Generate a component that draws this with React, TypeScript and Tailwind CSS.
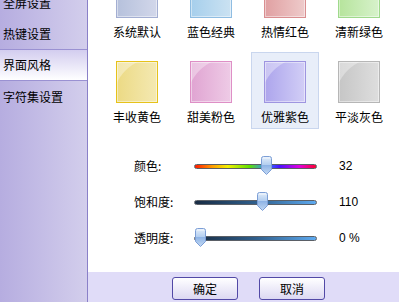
import { useState } from "react";

const menuItems = ["全屏设置", "热键设置", "界面风格", "字符集设置"];

const themes = [
  { name: "系统默认", cls: "from-[#b6c1dc] to-[#d2d7ea] border-[#a3aed2]" },
  { name: "蓝色经典", cls: "from-[#a6cfec] to-[#cbe2f2] border-[#8fbde2]" },
  { name: "热情红色", cls: "from-[#e0a0a2] to-[#eecbcb] border-[#d98e90]" },
  { name: "清新绿色", cls: "from-[#b6e49c] to-[#d7f2cb] border-[#9fd98c]" },
  { name: "丰收黄色", cls: "from-[#ecda84] to-[#f4e9b2] border-[#e6c21a]" },
  { name: "甜美粉色", cls: "from-[#e0a4d2] to-[#eecbe6] border-[#de8fc6]" },
  { name: "优雅紫色", cls: "from-[#ada5ec] to-[#d2cef6] border-[#9e95e0]" },
  { name: "平淡灰色", cls: "from-[#c6c6c6] to-[#dedede] border-[#b6b6b6]" },
];

function Thumb() {
  return (
    <svg width="11" height="19" viewBox="0 0 11 19">
      <defs>
        <linearGradient id="tg" x1="0" y1="0" x2="0" y2="1">
          <stop offset="0" stopColor="#e4eefa" />
          <stop offset="0.45" stopColor="#b4cff0" />
          <stop offset="0.5" stopColor="#8fb4e6" />
          <stop offset="1" stopColor="#c4daf4" />
        </linearGradient>
      </defs>
      <path d="M0.5 2.5 Q0.5 0.5 2.5 0.5 L8.5 0.5 Q10.5 0.5 10.5 2.5 L10.5 13.5 L5.5 18.5 L0.5 13.5 Z" fill="url(#tg)" stroke="#7c9ed6" />
      <path d="M2 2 L9 2" stroke="#ffffff" strokeOpacity="0.7" />
    </svg>
  );
}

function Slider({ label, value, pos, track }: { label: string; value: string; pos: number; track: string }) {
  return (
    <div className="flex items-center h-[36px]">
      <div className="w-[60px] text-[12px] leading-[16px] text-black">{label}</div>
      <div className="relative w-[123px] h-[19px] flex items-center">
        <div className={`w-full h-[5px] rounded-full border border-[#5a5f66] ${track}`} />
        <div className="absolute top-[-1px]" style={{ left: pos }}>
          <Thumb />
        </div>
      </div>
      <div className="ml-[22px] text-[12px] leading-[16px] text-black font-['Liberation_Sans',sans-serif]">{value}</div>
    </div>
  );
}

export default function App() {
  const [active, setActive] = useState(2);
  const [theme, setTheme] = useState(6);

  return (
    <div className="w-[399px] h-[302px] flex overflow-hidden bg-white font-['Noto_Sans_CJK_SC','Noto_Sans',sans-serif]">
      {/* Sidebar */}
      <div className="w-[88px] h-full border-r border-[#8a80c8] bg-gradient-to-r from-[#b6ade0] to-[#d3ceec] overflow-hidden">
        <div className="mt-[-13px]">
          {menuItems.map((item, i) =>
            i === active ? (
              <div
                key={item}
                className="h-[32px] flex items-center pl-[3px] border-y border-[#9a91d2] bg-gradient-to-b from-[#d3cdef] to-white text-[12px] text-black"
              >
                {item}
              </div>
            ) : (
              <div
                key={item}
                onClick={() => setActive(i)}
                className="h-[31px] flex items-center pl-[3px] text-[12px] text-black"
              >
                {item}
              </div>
            )
          )}
        </div>
      </div>

      {/* Main */}
      <div className="flex-1 flex flex-col">
        <div className="h-[272px] overflow-hidden bg-white">
          <div className="mt-[-33px] pl-[12px] grid grid-cols-[repeat(4,74px)] gap-y-[8px]">
            {themes.map((t, i) => (
              <div
                key={t.name}
                onClick={() => setTheme(i)}
                className={`mx-[3px] w-[68px] h-[77px] flex flex-col items-center pt-[8px] border ${
                  i === theme ? "border-[#c9d6ee] bg-[#e8eef9]" : "border-transparent"
                }`}
              >
                <div className={`relative w-[42px] h-[42px] border bg-gradient-to-r ${t.cls}`}>
                  <span className="absolute inset-0 shadow-[inset_0_0_0_1px_rgba(255,255,255,0.45)] bg-[radial-gradient(circle_at_100%_100%,transparent_44px,rgba(255,255,255,0.35)_45px)]" />
                </div>
                <div className="mt-[6px] text-[12px] leading-[16px] text-black whitespace-nowrap">{t.name}</div>
              </div>
            ))}
          </div>

          <div className="mt-[19px] pl-[46px]">
            <Slider
              label="颜色:"
              value="32"
              pos={67}
              track="bg-[linear-gradient(to_right,#ff1a00,#ff9a00_14%,#f2f000_27%,#5ee000_45%,#2f8cff_58%,#4a10ff_70%,#e000e0_86%,#ff0030)]"
            />
            <Slider label="饱和度:" value="110" pos={63} track="bg-gradient-to-r from-[#182c44] via-[#2f5f8c] to-[#5eaaf0]" />
            <Slider label="透明度:" value="0 %" pos={1} track="bg-gradient-to-r from-[#182c44] via-[#2f5f8c] to-[#5eaaf0]" />
          </div>
        </div>

        {/* Bottom bar */}
        <div className="h-[30px] bg-[#e0dcf8] flex items-start pt-[5px] pl-[84px] gap-[21px]">
          <button className="w-[66px] h-[23px] rounded-[3px] border border-[#5249a6] bg-gradient-to-b from-white to-[#dcd8f2] text-[12px] text-black">
            确定
          </button>
          <button className="w-[66px] h-[23px] rounded-[3px] border border-[#5249a6] bg-gradient-to-b from-white to-[#dcd8f2] text-[12px] text-black">
            取消
          </button>
        </div>
      </div>
    </div>
  );
}
